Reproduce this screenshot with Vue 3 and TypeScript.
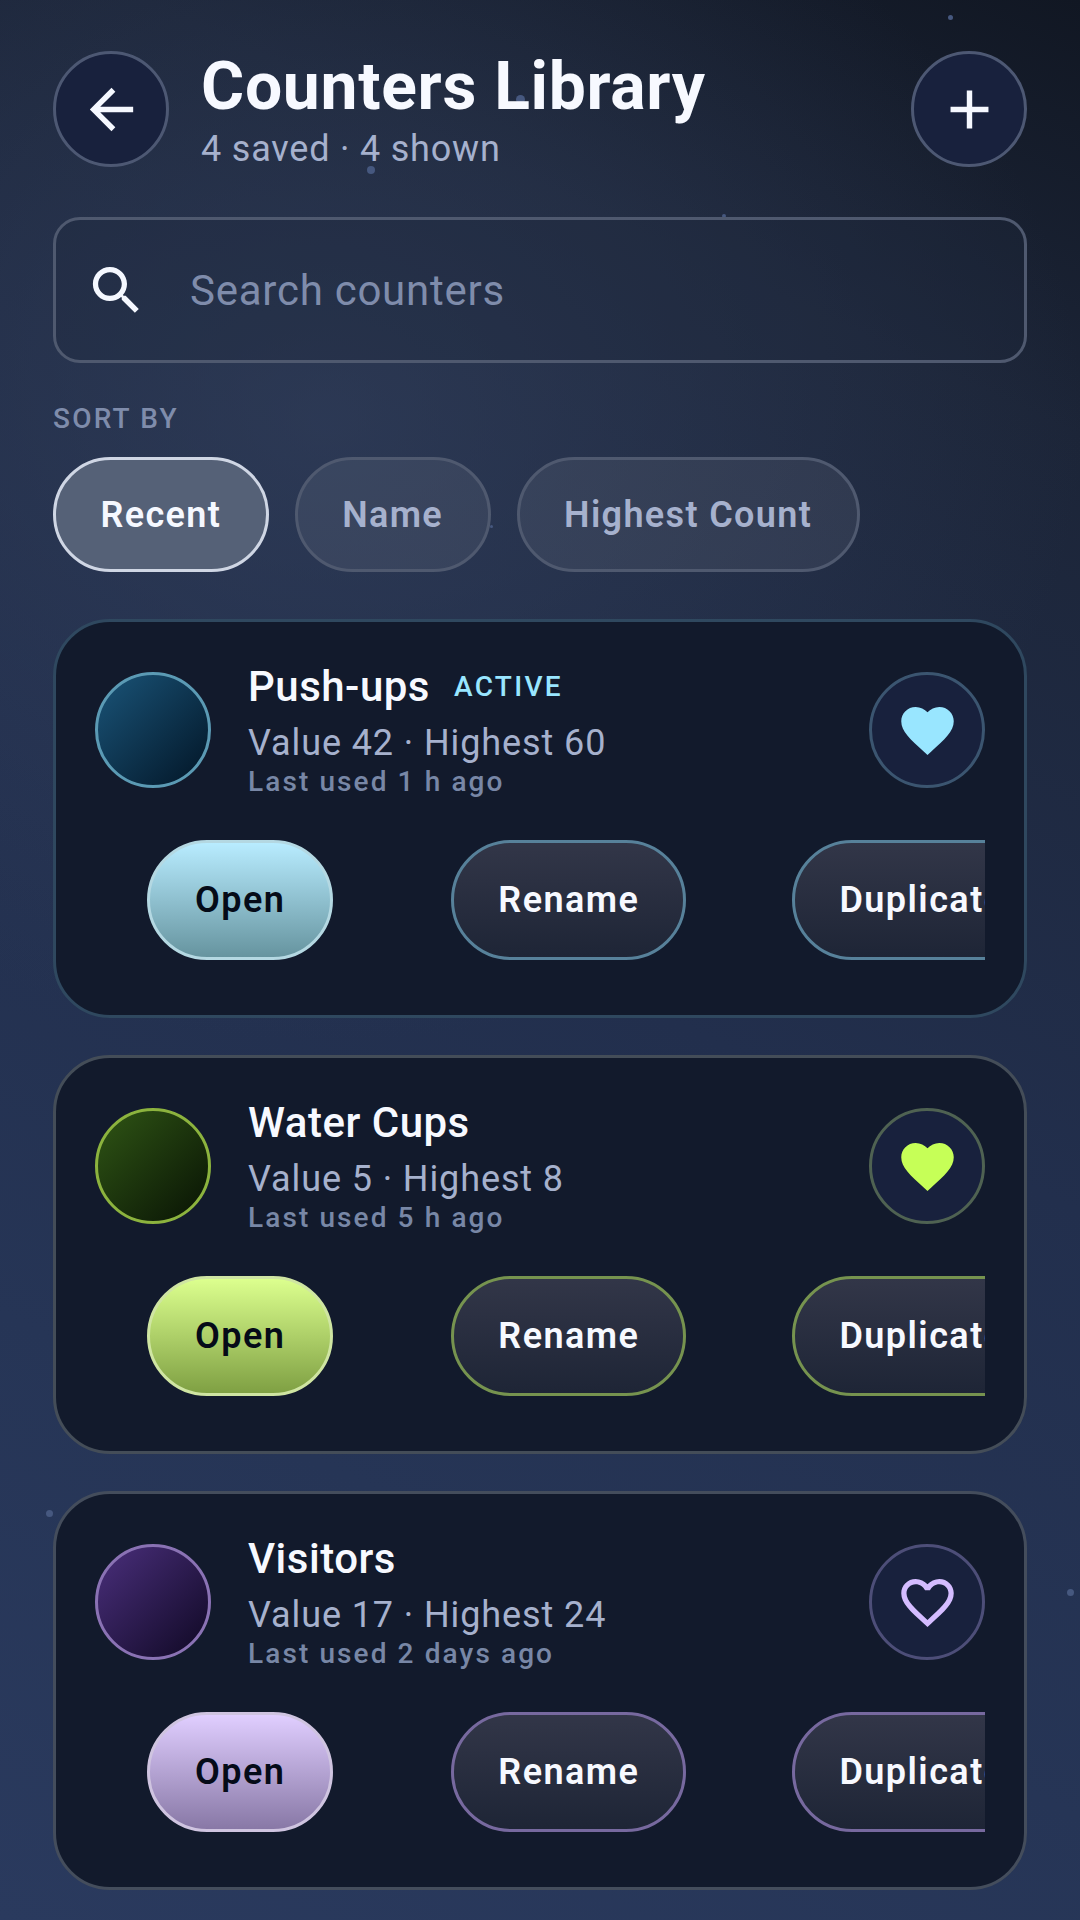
<script setup lang="ts">
type Counter = {
  name: string
  stats: string
  used: string
  active?: boolean
  fav: boolean
  tone: string
}

const counters: Counter[] = [
  { name: 'Push-ups', stats: 'Value 42 · Highest 60', used: 'Last used 1 h ago', active: true, fav: true, tone: 'cyan' },
  { name: 'Water Cups', stats: 'Value 5 · Highest 8', used: 'Last used 5 h ago', fav: true, tone: 'lime' },
  { name: 'Visitors', stats: 'Value 17 · Highest 24', used: 'Last used 2 days ago', fav: false, tone: 'violet' },
]

const sorts = ['Recent', 'Name', 'Highest Count']

const dots = [
  { x: 948, y: 15, s: 5 },
  { x: 516, y: 95, s: 9 },
  { x: 367, y: 166, s: 8 },
  { x: 722, y: 214, s: 4 },
  { x: 490, y: 525, s: 3 },
  { x: 46, y: 1510, s: 7 },
  { x: 1067, y: 1589, s: 7 },
]

const HEART =
  'M12 21.35l-1.45-1.32C5.4 15.36 2 12.28 2 8.5 2 5.42 4.42 3 7.5 3c1.74 0 3.41.81 4.5 2.09C13.09 3.81 14.76 3 16.5 3 19.58 3 22 5.42 22 8.5c0 3.78-3.4 6.86-8.55 11.54L12 21.35z'
const HEART_LINE =
  'M16.5 3c-1.74 0-3.41.81-4.5 2.09C10.91 3.81 9.24 3 7.5 3 4.42 3 2 5.42 2 8.5c0 3.78 3.4 6.86 8.55 11.54L12 21.35l1.45-1.32C18.6 15.36 22 12.28 22 8.5 22 5.42 19.58 3 16.5 3zm-4.4 15.55l-.1.1-.1-.1C7.14 14.24 4 11.39 4 8.5 4 6.5 5.5 5 7.5 5c1.54 0 3.04.99 3.57 2.36h1.87C13.46 5.99 14.96 5 16.5 5c2 0 3.5 1.5 3.5 3.5 0 2.89-3.14 5.74-7.9 10.05z'
</script>

<template>
  <main class="screen">
    <span
      v-for="(d, i) in dots"
      :key="i"
      class="dot"
      :style="{ left: d.x + 'px', top: d.y + 'px', width: d.s + 'px', height: d.s + 'px' }"
    ></span>

    <header class="top">
      <button type="button" class="round">
        <svg viewBox="0 0 24 24" class="icon"><path d="M20 11H7.83l5.59-5.59L12 4l-8 8 8 8 1.41-1.41L7.83 13H20v-2z" /></svg>
      </button>
      <div class="top__text">
        <h1>Counters Library</h1>
        <p>4 saved · 4 shown</p>
      </div>
      <button type="button" class="round">
        <svg viewBox="0 0 24 24" class="icon"><path d="M19 13h-6v6h-2v-6H5v-2h6V5h2v6h6v2z" /></svg>
      </button>
    </header>

    <div class="search">
      <svg viewBox="0 0 24 24" class="icon"><path d="M15.5 14h-.79l-.28-.27C15.41 12.59 16 11.11 16 9.5 16 5.91 13.09 3 9.5 3S3 5.91 3 9.5 5.91 16 9.5 16c1.61 0 3.09-.59 4.23-1.57l.27.28v.79l5 4.99L20.49 19l-4.99-5zm-6 0C7.01 14 5 11.99 5 9.5S7.01 5 9.5 5 14 7.01 14 9.5 11.99 14 9.5 14z" /></svg>
      <span>Search counters</span>
    </div>

    <div class="sort-label">SORT BY</div>
    <div class="chips">
      <button v-for="(s, i) in sorts" :key="s" type="button" class="chip" :class="{ 'chip--on': i === 0 }">{{ s }}</button>
    </div>

    <section class="list">
      <article v-for="c in counters" :key="c.name" class="card" :class="'card--' + c.tone">
        <div class="card__head">
          <div class="swatch"></div>
          <div class="card__text">
            <div class="card__title">
              <span class="name">{{ c.name }}</span>
              <span v-if="c.active" class="badge">ACTIVE</span>
            </div>
            <div class="stats">{{ c.stats }}</div>
            <div class="used">{{ c.used }}</div>
          </div>
          <button type="button" class="fav">
            <svg viewBox="0 0 24 24" class="icon"><path :d="c.fav ? HEART : HEART_LINE" /></svg>
          </button>
        </div>
        <div class="actions">
          <button type="button" class="btn btn--main">Open</button>
          <button type="button" class="btn">Rename</button>
          <button type="button" class="btn">Duplicate</button>
        </div>
      </article>
    </section>
  </main>
</template>

<style scoped>
.screen {
  position: relative;
  width: 1080px;
  height: 1920px;
  overflow: hidden;
  box-sizing: border-box;
  padding: 51px 53px 0;
  font-family: Roboto, 'Noto Sans', sans-serif;
  background:
    radial-gradient(ellipse 760px 620px at 30% 22%, rgba(52, 66, 96, 0.62), rgba(52, 66, 96, 0) 100%),
    linear-gradient(205deg, #111723 0%, #1c2538 18%, #222f4d 50%, #263556 75%, #2a3a5e 100%);
}

.dot {
  position: absolute;
  border-radius: 50%;
  background: #46587f;
}

button {
  font-family: inherit;
  padding: 0;
}

.icon {
  display: block;
  width: 63px;
  height: 63px;
  fill: currentColor;
}

.top {
  position: relative;
  display: flex;
  align-items: flex-start;
  gap: 32px;
}

.round {
  flex: none;
  display: flex;
  align-items: center;
  justify-content: center;
  box-sizing: border-box;
  width: 116px;
  height: 116px;
  border: 3px solid #4d5873;
  border-radius: 50%;
  background: #18213d;
  color: #f5f8ff;
}

.round .icon {
  width: 65px;
  height: 65px;
}

.top__text {
  flex: 1;
  min-width: 0;
}

.top h1 {
  margin: 0;
  font-size: 66px;
  line-height: 72px;
  font-weight: 700;
  letter-spacing: 0.7px;
  color: #f7f9ff;
}

.top p {
  margin: 5px 0 0;
  font-size: 36px;
  line-height: 42px;
  letter-spacing: 0.8px;
  color: #a6b1cd;
}

.search {
  position: relative;
  display: flex;
  align-items: center;
  gap: 42px;
  box-sizing: border-box;
  height: 146px;
  margin-top: 47px;
  padding: 0 29px;
  border: 3px solid #4f596f;
  border-radius: 27px;
  background: rgba(30, 40, 60, 0.3);
  color: #f5f8ff;
}

.search span {
  font-size: 42px;
  letter-spacing: 0.75px;
  color: #7f8cab;
}

.sort-label {
  position: relative;
  margin-top: 40px;
  font-size: 28px;
  line-height: 32px;
  font-weight: 500;
  letter-spacing: 2.2px;
  color: #7f8cab;
}

.chips {
  position: relative;
  display: flex;
  gap: 26px;
  margin-top: 22px;
}

.chip {
  box-sizing: border-box;
  height: 115px;
  padding: 0 44.5px;
  border: 3px solid #4f596f;
  border-radius: 58px;
  background: rgba(255, 255, 255, 0.07);
  font-size: 36px;
  font-weight: 600;
  letter-spacing: 1.35px;
  color: #a6b1cd;
}

.chip--on {
  border-color: #cfd6e4;
  background: #556177;
  color: #f5f8ff;
}

.list {
  position: relative;
  display: flex;
  flex-direction: column;
  gap: 37px;
  margin-top: 47px;
}

.card {
  box-sizing: border-box;
  height: 399px;
  padding: 50px 39px 0;
  border: 3px solid var(--edge);
  border-radius: 57px;
  background: #121a2c;
}

.card--cyan {
  --edge: #2f485f;
  --ring: #5b9ab4;
  --fav-ring: #3b5570;
  --line: #57819a;
  --accent: #99e6ff;
  --swatch: linear-gradient(135deg, #1a5478, #021526);
  --main: linear-gradient(180deg, #b8ecff, #66949f);
  --main-edge: #b4d8e2;
}

.card--lime {
  --edge: #444d58;
  --ring: #8cb33e;
  --fav-ring: #4f6252;
  --line: #76934f;
  --accent: #c6ff57;
  --swatch: linear-gradient(135deg, #2f5515, #081204);
  --main: linear-gradient(180deg, #dcff8e, #7fa043);
  --main-edge: #cfe5a2;
}

.card--violet {
  --edge: #444d5c;
  --ring: #8a72b4;
  --fav-ring: #4d4e78;
  --line: #77699f;
  --accent: #d4bcff;
  --swatch: linear-gradient(135deg, #4a2f7c, #0f0823);
  --main: linear-gradient(180deg, #e0ceff, #8878a6);
  --main-edge: #cfc4e0;
}

.card__head {
  display: flex;
  align-items: flex-start;
  gap: 37px;
}

.swatch {
  flex: none;
  box-sizing: border-box;
  width: 116px;
  height: 116px;
  border: 3px solid var(--ring);
  border-radius: 50%;
  background: var(--swatch);
}

.card__text {
  flex: 1;
  min-width: 0;
  margin-top: -10px;
}

.card__title {
  display: flex;
  align-items: center;
  gap: 24px;
  height: 48px;
}

.name {
  font-size: 42px;
  font-weight: 500;
  letter-spacing: 0.5px;
  color: #f7f9ff;
}

.badge {
  font-size: 28px;
  font-weight: 500;
  letter-spacing: 2.3px;
  color: var(--accent);
}

.stats {
  margin-top: 12px;
  font-size: 36px;
  line-height: 42px;
  letter-spacing: 0.9px;
  color: #a6b1cd;
}

.used {
  margin-top: 2px;
  font-size: 28px;
  line-height: 32px;
  font-weight: 500;
  letter-spacing: 2.1px;
  color: #7887a6;
}

.fav {
  flex: none;
  display: flex;
  align-items: center;
  justify-content: center;
  box-sizing: border-box;
  width: 116px;
  height: 116px;
  border: 3px solid var(--fav-ring);
  border-radius: 50%;
  background: #18213d;
  color: var(--accent);
}

.actions {
  display: flex;
  gap: 106px;
  margin-top: 42px;
  padding-left: 52px;
  overflow: hidden;
}

.btn {
  flex: none;
  box-sizing: border-box;
  height: 120px;
  padding: 0 44px;
  border: 3px solid var(--line);
  border-radius: 60px;
  background: linear-gradient(180deg, #323648, #1e2536);
  font-size: 36px;
  font-weight: 600;
  letter-spacing: 1.45px;
  color: #f7f9ff;
}

.btn--main {
  margin-right: 12px;
  padding: 0 45px;
  border-color: var(--main-edge);
  background: var(--main);
  color: #050b18;
}
</style>

<style>
body {
  margin: 0;
  background: #1c2538;
}
</style>
